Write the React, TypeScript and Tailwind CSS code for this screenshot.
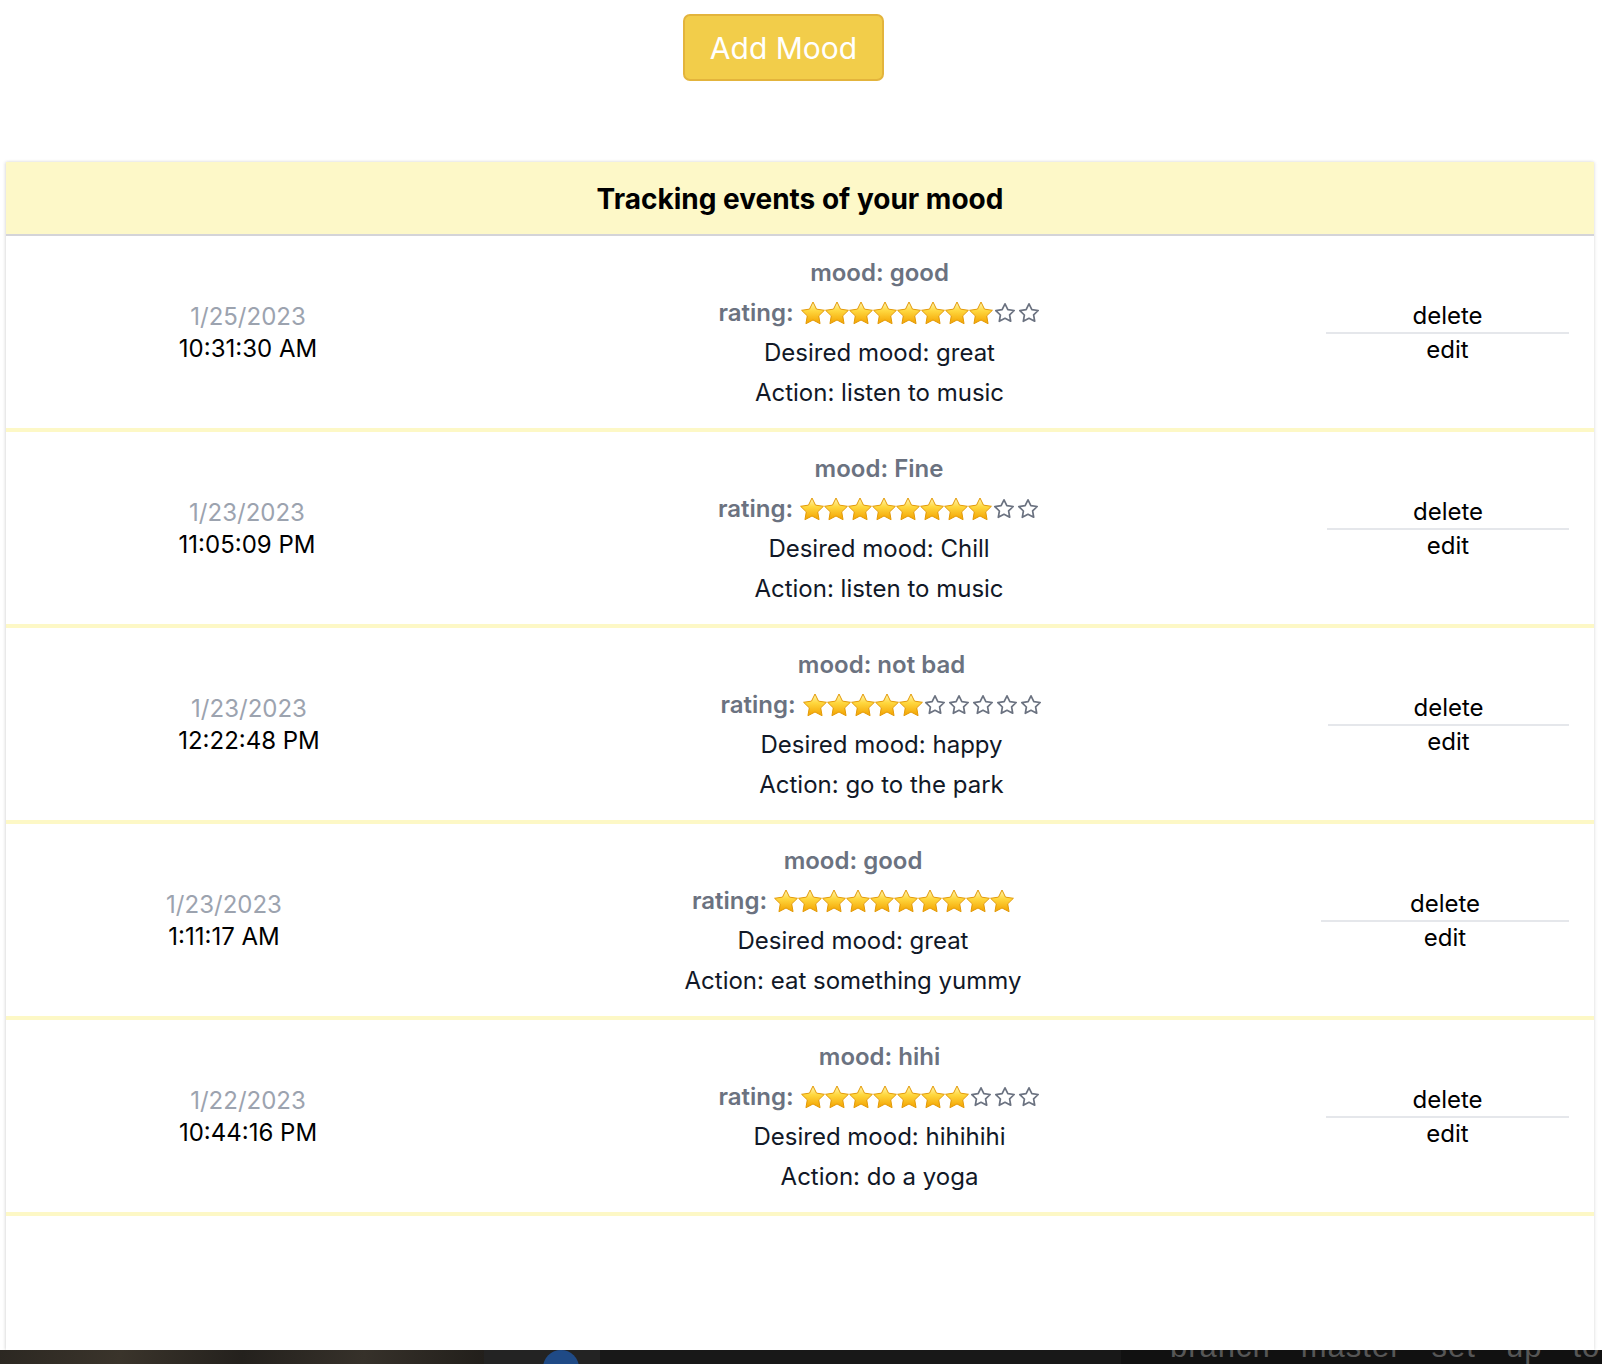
import { Fragment } from "react";

type MoodEvent = {
  date: string;
  time: string;
  mood: string;
  rating: number;
  desired: string;
  action: string;
  cols: string;
};

const events: MoodEvent[] = [
  { date: "1/25/2023", time: "10:31:30 AM", mood: "good", rating: 8, desired: "great", action: "listen to music", cols: "grid-cols-[484px_779px_1fr]" },
  { date: "1/23/2023", time: "11:05:09 PM", mood: "Fine", rating: 8, desired: "Chill", action: "listen to music", cols: "grid-cols-[482px_782px_1fr]" },
  { date: "1/23/2023", time: "12:22:48 PM", mood: "not bad", rating: 5, desired: "happy", action: "go to the park", cols: "grid-cols-[486px_779px_1fr]" },
  { date: "1/23/2023", time: "1:11:17 AM", mood: "good", rating: 10, desired: "great", action: "eat something yummy", cols: "grid-cols-[436px_822px_1fr]" },
  { date: "1/22/2023", time: "10:44:16 PM", mood: "hihi", rating: 7, desired: "hihihihi", action: "do a yoga", cols: "grid-cols-[484px_779px_1fr]" },
];

const STAR = "M12 1L15.53 8.15L23.41 9.29L17.71 14.85L19.05 22.71L12 19L4.95 22.71L6.29 14.85L0.59 9.29L8.47 8.15Z";

const FullStar = () => (
  <svg viewBox="0 0 24 24" className="w-[24px] h-[24px] shrink-0">
    <defs>
      <linearGradient id="starfill" x1="0" y1="0" x2="0" y2="1">
        <stop offset="0" stopColor="#fff6b8" />
        <stop offset="0.4" stopColor="#ffd83f" />
        <stop offset="1" stopColor="#f3a200" />
      </linearGradient>
    </defs>
    <path d={STAR} fill="url(#starfill)" stroke="#e39a06" strokeWidth="1" strokeLinejoin="round" />
  </svg>
);

const EmptyStar = () => (
  <svg viewBox="0 0 24 24" className="w-[24px] h-[24px] shrink-0">
    <path d="M12 2.8l2.85 5.8 6.35.9-4.6 4.45 1.1 6.3L12 17.3l-5.7 3 1.1-6.3-4.6-4.45 6.35-.9z" fill="none" stroke="#6b7280" strokeWidth="1.7" strokeLinejoin="round" />
  </svg>
);

const Stars = ({ value }: { value: number }) => (
  <span className="inline-flex items-center ml-[7px]">
    {Array.from({ length: 10 }).map((_, i) => (
      <Fragment key={i}>{i < value ? <FullStar /> : <EmptyStar />}</Fragment>
    ))}
  </span>
);

export default function App() {
  return (
    <div className="min-h-screen bg-white font-['Inter',sans-serif] flex flex-col">
      {/* Add button */}
      <div className="flex justify-center pr-[35px] pt-[14px]">
        <button className="w-[201px] h-[67px] rounded-[7px] border-2 border-[#e3b43c] bg-[#f2cd4a] text-white text-[30px] leading-none">
          Add Mood
        </button>
      </div>

      {/* Events card */}
      <div className="mt-[81px] ml-[6px] mr-[8px] h-[1188px] bg-white shadow-[-1px_0_3px_rgba(0,0,0,0.12),1px_0_3px_rgba(0,0,0,0.08)]">
        <div className="h-[74px] bg-[#fdf8c8] border-b-2 border-[#d4d4d8] flex items-center justify-center">
          <h2 className="text-[28px] font-bold text-black pt-[1px]">Tracking events of your mood</h2>
        </div>

        {events.map((ev) => (
          <div key={ev.time} className={`grid ${ev.cols} h-[196px] pt-[2px] border-b-4 border-[#fdf8c6] items-center text-[24px]`}>
            <div className="flex flex-col items-center leading-8">
              <span className="text-[#9ca3af]">{ev.date}</span>
              <span className="text-black">{ev.time}</span>
            </div>
            <div className="flex flex-col items-center leading-10">
              <span className="text-[#6b7280] font-semibold">mood: {ev.mood}</span>
              <span className="text-[#6b7280] font-semibold flex items-center">
                rating:
                <Stars value={ev.rating} />
              </span>
              <span className="text-[#111827]">Desired mood: {ev.desired}</span>
              <span className="text-[#111827]">Action: {ev.action}</span>
            </div>
            <div className="pl-[57px] pr-[25px] text-black text-center leading-8">
              <div className="border-b-2 border-[#e5e7eb]">delete</div>
              <div>edit</div>
            </div>
          </div>
        ))}
      </div>

      {/* desktop strip peeking under the window */}
      <div className="h-[14px] flex overflow-hidden">
        <div className="w-[484px] bg-[linear-gradient(100deg,#2c2822,#3a342b_25%,#24211d_50%,#36312a_75%,#221f1b)]" />
        <div className="w-[116px] bg-[#232323] relative overflow-hidden">
          <div className="absolute left-[59px] top-[0px] w-[36px] h-[36px] rounded-full bg-[#1f4a86]" />
        </div>
        <div className="w-[521px] bg-[#181818]" />
        <div className="flex-1 bg-[#111111] relative overflow-hidden">
          <div className="absolute left-[49px] bottom-[2px] flex items-end gap-[30px] text-[#565656] text-[31px] leading-none tracking-[1px] font-['Liberation_Sans',sans-serif] whitespace-nowrap">
            <span>branch</span>
            <span>master</span>
            <span>set</span>
            <span>up</span>
            <span>to</span>
          </div>
        </div>
      </div>
    </div>
  );
}
